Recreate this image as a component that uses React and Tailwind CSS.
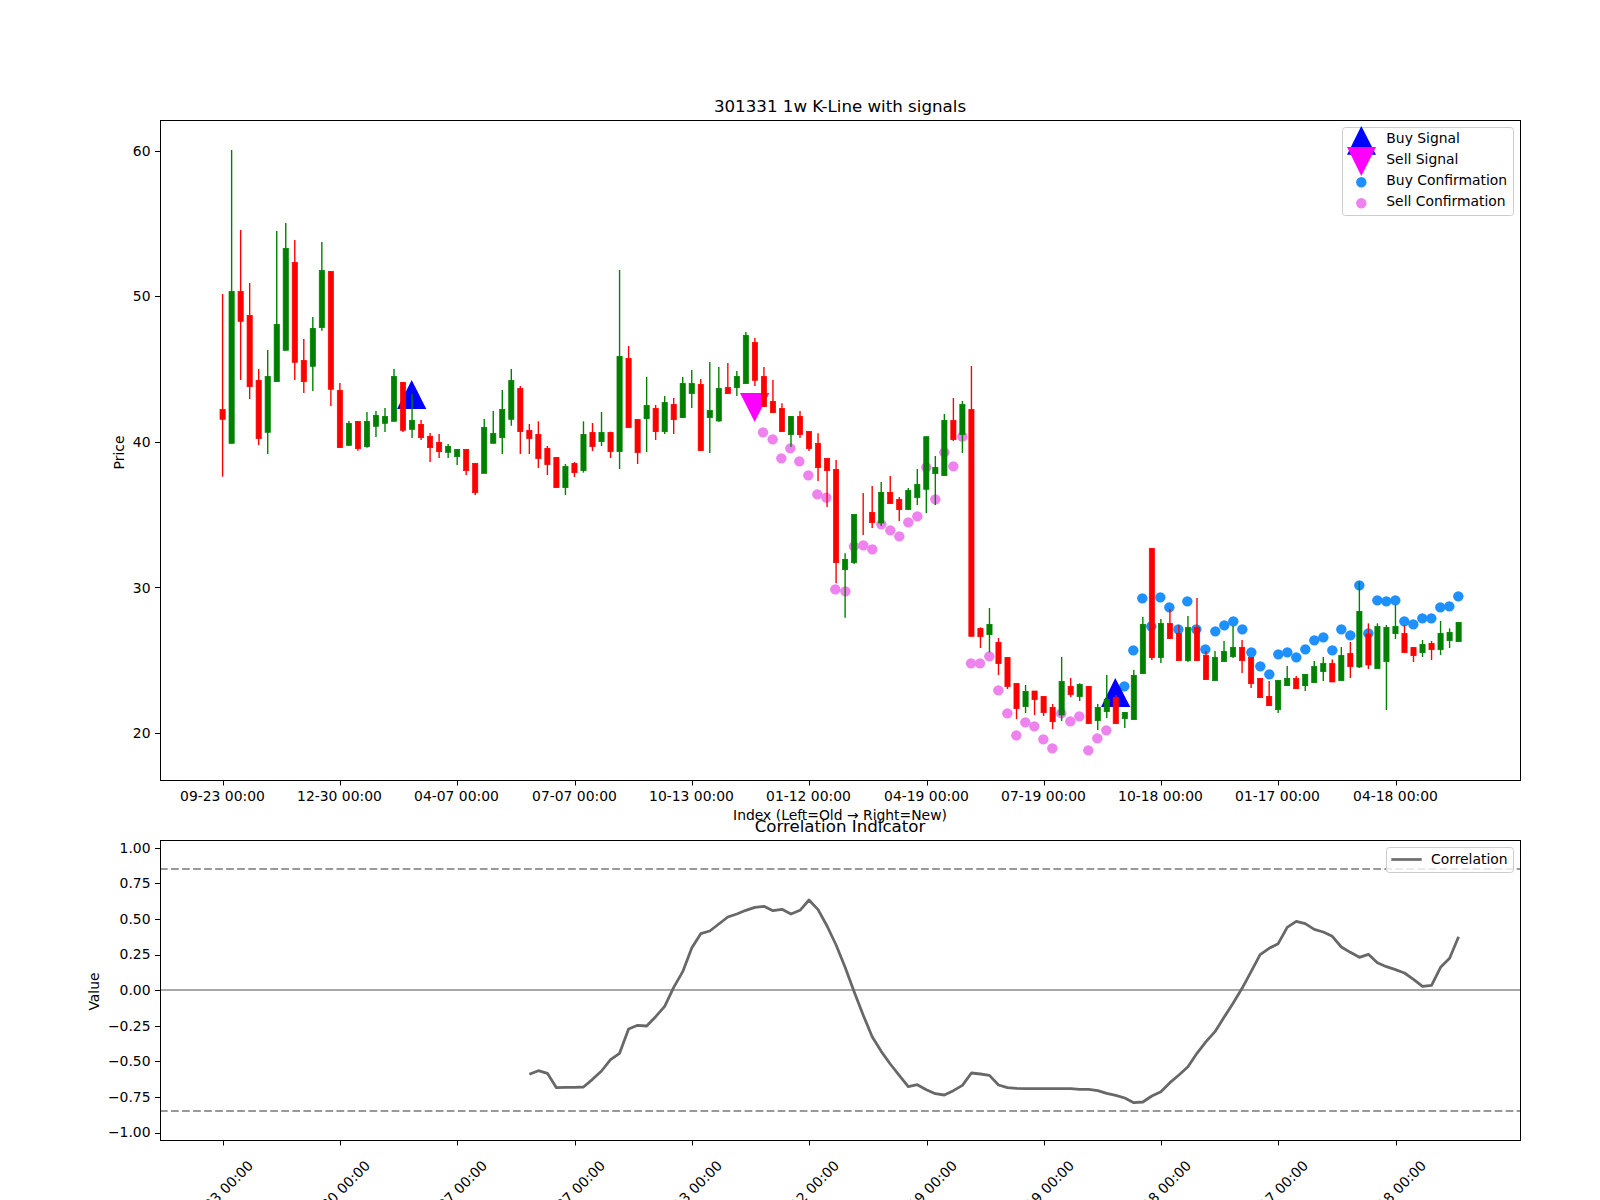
const F = '"DejaVu Sans", sans-serif';
const X = (i) => 222.6 + 9.022 * i;
const RED = '#ff0000';
const GREEN = '#008000';

// Each row: colour, wick top, body top, body bottom, wick bottom, in crop coordinates (3x) of the origin y
const rows = (y0, list) => list.map(([c, a, b, d, e]) => [c, y0 + a / 3, y0 + b / 3, y0 + d / 3, y0 + e / 3]);
const candles = [
  ...rows(100, [
    ['r',582,928,958,1130],['g',150,574,1030,1030],['r',390,574,664,840],['r',549,646,860,897],['r',807,841,1016,1035],
    ['g',750,829,997,1062],['g',393,673,845,845],['g',369,445,751,751],['r',420,487,787,840],['r',717,781,845,879],
    ['g',651,685,799,873],['g',426,511,683,692],['r',514,514,868,918],['r',849,871,1043,1043],['g',963,970,1036,1037],
    ['r',964,964,1046,1052],['g',936,964,1040,1043],['g',933,946,979,1011],['g',924,949,970,996],['g',807,829,964,964],
    ['r',847,847,991,996],['g',882,961,988,1014],['r',960,973,1013,1020],['r',999,1009,1043,1086],['r',1002,1027,1055,1074],
    ['g',1032,1039,1057,1074],['g',1048,1048,1070,1095],
  ]),
  ...rows(250, [
    ['r',598,598,662,675],['r',640,640,728,735],['g',507,532,670,670],['g',483,550,580,580],['g',420,478,563,612],
    ['g',357,391,508,527],['r',408,415,545,612],['r',522,541,566,612],['r',514,553,626,654],['r',588,595,644,675],
    ['r',622,622,713,713],['g',642,649,713,735],['r',636,640,668,681],['g',514,553,662,668],['r',519,547,590,603],
    ['g',486,547,575,588],['r',545,547,605,624],['g',60,319,605,657],['r',288,325,533,533],['r',508,508,608,642],
    ['g',381,466,506,606],['r',465,475,545,570],['g',438,457,545,552],['r',444,463,509,552],['g',381,400,503,504],
    ['g',360,400,431,474],['r',387,403,602,602],['g',336,481,503,609],['g',351,415,513,515],['r',339,412,431,431],
    ['g',363,379,413,438],['g',246,256,401,401],['r',264,277,391,408],['r',351,379,470,470],
  ]),
  ...rows(340, [
    ['r',120,184,218,218],['r',190,205,275,275],['g',229,229,284,320],['r',213,229,284,294],['r',274,274,326,333],
    ['r',280,310,383,423],['r',355,355,392,501],['r',360,388,668,730],['g',640,658,689,833],['g',523,523,668,672],
    ['r',459,0,0,585],['r',438,517,548,564],['g',426,457,549,558],['r',408,457,491,491],['r',471,478,509,543],
    ['g',444,451,509,510],['g',387,433,473,495],['g',290,290,448,519],['g',348,382,401,495],['g',222,241,407,407],
    ['r',174,241,299,303],['g',183,193,284,339],['r',78,208,889,889],
  ]),
  ...rows(540, [
    ['r',262,265,290,324],['g',204,253,284,337],['r',294,307,371,405],['r',352,352,440,447],['r',430,430,506,537],
    ['g',435,454,500,519],['r',453,453,479,525],['r',468,469,518,528],['r',492,502,545,567],['g',351,424,525,543],
    ['r',414,439,464,471],['g',430,433,470,483],['r',439,439,551,551],['g',492,502,542,570],['g',405,478,515,534],
    ['r',465,472,551,551],['g',516,517,536,564],['g',390,406,539,539],['g',231,253,401,401],['r',25,25,353,360],
    ['g',237,250,353,369],['r',207,250,296,296],
  ]),
  ...rows(530, [
    ['r',285,310,392,392],['g',258,292,392,396],['r',204,292,392,392],['r',363,376,449,449],['g',363,382,452,452],
    ['g',333,364,395,395],['g',288,352,380,384],['r',330,352,392,429],['r',381,382,461,474],['r',445,445,503,503],
    ['r',453,499,527,527],['g',451,451,539,549],['g',408,445,467,467],['r',438,445,476,476],['g',433,433,467,483],
    ['g',393,409,458,458],['g',381,400,425,453],['r',388,400,456,456],['g',351,376,452,452],['r',336,370,410,444],
  ]),
  ...rows(540, [
    ['g',125,214,381,384],['r',250,282,375,387],['g',250,259,386,386],['g',255,262,365,510],['g',195,259,281,297],
    ['r',256,280,338,338],['r',322,322,347,366],['g',300,313,338,351],['r',303,310,329,360],['g',243,280,329,345],
    ['g',265,277,302,324],['g',247,247,305,305],
  ]),
];

const pts = (x0, y0, list) => list.map(([x, y]) => [x0 + x / 3, y0 + y / 3]);
const violet = [
  ...pts(460, 250, [[909,547]]),
  ...pts(770, 340, [[8,298],[34,355],[61,325],[88,364],[115,406],[142,463],[169,473],[196,748],[226,754],[252,619],[280,616],[307,628],[334,553],[361,571],[388,589],[415,547],[442,529],[469,382],[496,478],[523,337],[550,379],[577,290]]),
  ...pts(950, 540, [[63,370],[90,370],[118,349],[145,451],[172,520],[199,586],[226,547],[253,559],[280,598],[307,625],[334,520],[361,544],[388,529],[415,631],[442,595],[469,571]]),
];
const blue = [
  ...pts(1120, 530, [[13,469],[40,361],[67,205],[94,289],[121,202],[148,232],[175,298],[202,214],[229,298],[256,358],[286,304],[313,286],[340,274],[367,298],[394,367],[421,409],[448,433],[475,373],[502,367],[529,382],[556,358],[583,331],[610,322]]),
  ...pts(1300, 540, [[97,331],[124,268],[151,286],[178,136],[205,280],[232,181],[259,184],[286,181],[313,244],[340,253],[367,235],[394,235],[421,202],[448,199],[475,169]]),
];

const corrA = [643,632,640,683,682,682,681,658,633,599,580,507,496,498,470,439,382,335,264,221,213,192,171,162,151,142,139,152,148,162,151,120,149,198,255,322,395,465,530,574,612,646,680,674,689,701,705,692,676,639,642,646,675];
const corrB = [683,685,686,686,686,686,686,686,688,688,692,700,706,714,728,726,708,695,668,645,620,580,545,515,472,430,385,335,284,265,251,202,184,191,208,216,229,261,277,292,283,308,320,329,339,358,379,376,322,295,230];
const corr = [...corrA, ...corrB].map((y, k) => [X(34 + k), 860 + y / 3]);

const dates = ['09-23 00:00','12-30 00:00','04-07 00:00','07-07 00:00','10-13 00:00','01-12 00:00','04-19 00:00','07-19 00:00','10-18 00:00','01-17 00:00','04-18 00:00'];
const tickX = dates.map((_, k) => Math.round(222.7 + 117.3 * k) + 0.5);
const priceTicks = [60, 50, 40, 30, 20].map((p) => [p, 150.5 + (60 - p) * 14.555]);
const valueTicks = ['1.00','0.75','0.50','0.25','0.00','−0.25','−0.50','−0.75','−1.00'].map((t, k) => [t, 847.9 + k * 35.59]);
const snap = (v) => Math.round(v) + 0.5;

const Txt = ({ children, ...p }) => (
  <text fontFamily={F} fontSize="13.9" fill="#000" {...p}>{children}</text>
);

function PriceChart() {
  return (
    <svg className="block w-[1600px] h-[820px] overflow-visible" viewBox="0 0 1600 820">
      <Txt x="840" y="112" fontSize="16.67" textAnchor="middle">301331 1w K-Line with signals</Txt>
      {violet.map(([x, y], k) => <circle key={k} cx={x} cy={y} r="5.2" fill="#ee82ee" />)}
      {blue.map(([x, y], k) => <circle key={k} cx={x} cy={y} r="5.2" fill="#1e90ff" />)}
      <polygon points="411.7,380 397,409 426.3,409" fill="#0000ff" />
      <polygon points="1115.3,678 1101,707 1130.3,707" fill="#0000ff" />
      <polygon points="740,393 769.3,393 754.7,422" fill="#ff00ff" />
      {candles.map(([c, wt, bt, bb, wb], i) => {
        const col = c === 'r' ? RED : GREEN;
        const x = X(i);
        return (
          <g key={i}>
            {bb > bt && <rect x={x - 2.6} y={bt} width="5.2" height={bb - bt} fill={col} stroke={col} strokeWidth="0.7" />}
            <line x1={x} x2={x} y1={wt} y2={wb} stroke={col} strokeWidth="1.39" />
          </g>
        );
      })}
      <rect x="160.5" y="120.5" width="1360" height="660" fill="none" stroke="#000" strokeWidth="1" />
      {priceTicks.map(([p, y]) => (
        <g key={p}>
          <line x1="155" x2="160" y1={snap(y)} y2={snap(y)} stroke="#000" strokeWidth="1" />
          <Txt x="150.5" y={y + 5.4} textAnchor="end">{p}</Txt>
        </g>
      ))}
      {tickX.map((x, k) => (
        <g key={k}>
          <line x1={x} x2={x} y1="781" y2="785.5" stroke="#000" strokeWidth="1" />
          <Txt x={x - 1} y="801" textAnchor="middle">{dates[k]}</Txt>
        </g>
      ))}
      <Txt x="840" y="820" textAnchor="middle">Index (Left=Old → Right=New)</Txt>
      <Txt transform="translate(124 452.5) rotate(-90)" textAnchor="middle">Price</Txt>
      <rect x="1342.5" y="127.5" width="171" height="88" rx="3" fill="#ffffff" fillOpacity="0.8" stroke="#cccccc" strokeWidth="1" />
      <polygon points="1361.3,126 1347,154.7 1376,154.7" fill="#0000ff" />
      <polygon points="1347,147 1376,147 1361.3,176" fill="#ff00ff" />
      <circle cx="1361.3" cy="182.3" r="5.2" fill="#1e90ff" />
      <circle cx="1361.3" cy="203.3" r="5.2" fill="#ee82ee" />
      <Txt x="1386.3" y="143">Buy Signal</Txt>
      <Txt x="1386.3" y="164">Sell Signal</Txt>
      <Txt x="1386.3" y="185">Buy Confirmation</Txt>
      <Txt x="1386.3" y="206">Sell Confirmation</Txt>
    </svg>
  );
}

function CorrelationChart() {
  return (
    <svg className="block w-[1600px] h-[380px] overflow-visible" viewBox="0 820 1600 380">
      <Txt x="840" y="832" fontSize="16.67" textAnchor="middle">Correlation Indicator</Txt>
      <line x1="160" x2="1520" y1="869" y2="869" stroke="#999999" strokeWidth="2" strokeDasharray="7.7 3.33" />
      <line x1="160" x2="1520" y1="1111" y2="1111" stroke="#999999" strokeWidth="2" strokeDasharray="7.7 3.33" />
      <line x1="160" x2="1520" y1="990" y2="990" stroke="#a8a8a8" strokeWidth="2" />
      <polyline points={corr.map((p) => p.join(',')).join(' ')} fill="none" stroke="#686868" strokeWidth="2.78" strokeLinejoin="round" />
      <rect x="160.5" y="840.5" width="1360" height="300" fill="none" stroke="#000" strokeWidth="1" />
      {valueTicks.map(([t, y]) => (
        <g key={t}>
          <line x1="155" x2="160" y1={snap(y)} y2={snap(y)} stroke="#000" strokeWidth="1" />
          <Txt x="150.5" y={y + 4.8} textAnchor="end">{t}</Txt>
        </g>
      ))}
      {tickX.map((x, k) => (
        <g key={k}>
          <line x1={x} x2={x} y1="1141" y2="1145.5" stroke="#000" strokeWidth="1" />
          <Txt textAnchor="middle" transform={`translate(${x + 0.5} 1196.5) rotate(-45)`}>{dates[k]}</Txt>
        </g>
      ))}
      <Txt transform="translate(99 991.5) rotate(-90)" textAnchor="middle">Value</Txt>
      <rect x="1386.5" y="847.5" width="127" height="25" rx="3" fill="#ffffff" fillOpacity="0.8" stroke="#cccccc" strokeWidth="1" />
      <line x1="1391.3" x2="1421.7" y1="859.5" y2="859.5" stroke="#707070" strokeWidth="2.78" />
      <Txt x="1431" y="864">Correlation</Txt>
    </svg>
  );
}

export default function App() {
  return (
    <div className="flex flex-col w-[1600px] h-[1200px] overflow-hidden bg-white">
      <PriceChart />
      <CorrelationChart />
    </div>
  );
}
